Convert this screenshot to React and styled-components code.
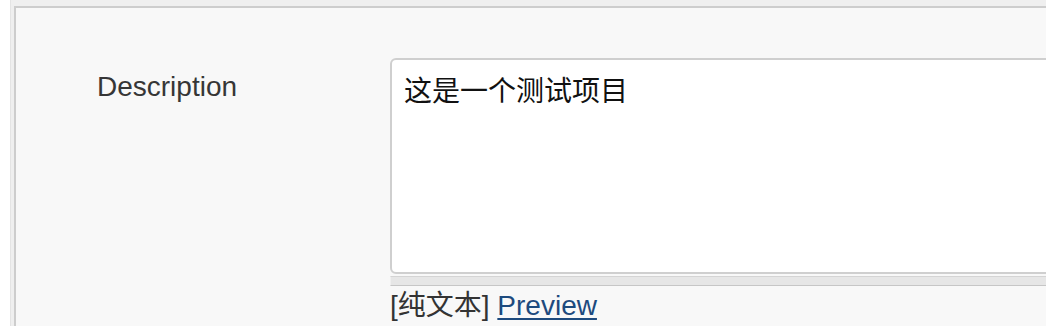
import React from 'react';
import styled, { createGlobalStyle } from 'styled-components';

const Global = createGlobalStyle`
    html, body {
        margin: 0;
        padding: 0;
        background: #fff;
        overflow: hidden;
    }
    body {
        width: 1046px;
        height: 326px;
        font-family: 'Liberation Sans', 'Noto Sans CJK SC', sans-serif;
    }
`;

const Frame = styled.div`
    margin-left: 10px;
    border-left: 1px solid #e4e4e4;
    background: #efefef;
    padding: 6px 0 0 3px;
    height: 320px;
    overflow: hidden;
`;

const Panel = styled.fieldset`
    margin: 0;
    padding: 0;
    border: 0;
    border-top: 2px solid #cdcdcd;
    border-left: 2px solid #cdcdcd;
    background: #f8f8f8;
    height: 100%;
    box-sizing: border-box;
    overflow: hidden;
`;

const Row = styled.div`
    display: grid;
    grid-template-columns: 374px 1fr;
    padding-top: 50px;
`;

const Label = styled.label`
    padding: 12px 0 0 81px;
    font-size: 28px;
    line-height: 34px;
    color: #363636;
`;

const Field = styled.div`
    display: flex;
    flex-direction: column;
    width: 720px;
`;

const Area = styled.textarea`
    display: block;
    box-sizing: border-box;
    width: 100%;
    height: 216px;
    margin: 0;
    padding: 15px 12px 14px;
    border: 2px solid #cfcfcf;
    border-radius: 6px;
    background: #fff;
    font-family: 'Liberation Sans', 'Noto Sans CJK SC', sans-serif;
    font-size: 28px;
    line-height: 34px;
    color: #111;
    resize: none;
    outline: none;
`;

const Grip = styled.div`
    height: 8px;
    margin-top: 2px;
    background: #e6e6e6;
    border: 1px solid #c6c6c6;
    border-top-color: #d4d4d4;
    border-left-color: #f0f0f0;
`;

const Hint = styled.div`
    margin-top: 3px;
    font-size: 28px;
    line-height: 34px;
    color: #333;
    & a {
        color: #1d4a7e;
        text-decoration: underline;
        text-underline-offset: 3px;
    }
`;

const App = () => {
    return (
        <>
            <Global />
            <Frame>
                <Panel>
                    <Row>
                        <Label htmlFor="desc">Description</Label>
                        <Field>
                            <Area id="desc" defaultValue="这是一个测试项目" />
                            <Grip />
                            <Hint>
                                [纯文本] <a href="#preview">Preview</a>
                            </Hint>
                        </Field>
                    </Row>
                </Panel>
            </Frame>
        </>
    );
};

export default App;
